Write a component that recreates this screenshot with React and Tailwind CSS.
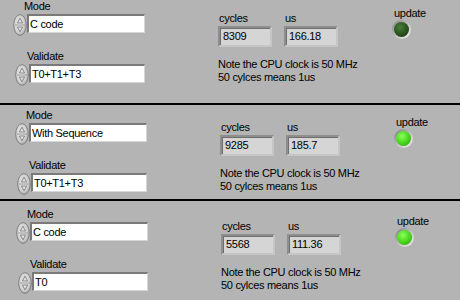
import React from "react";

const panels = [
  {
    mode: "C code",
    validate: "T0+T1+T3",
    cycles: "8309",
    us: "166.18",
    on: false,
    wrap: "h-[105px] border-b-2 border-black pt-0 pl-0",
  },
  {
    mode: "With Sequence",
    validate: "T0+T1+T3",
    cycles: "9285",
    us: "185.7",
    on: true,
    wrap: "h-[96px] border-b-2 border-black pt-[4px] pl-[2px]",
  },
  {
    mode: "C code",
    validate: "T0",
    cycles: "5568",
    us: "111.36",
    on: true,
    wrap: "h-[99px] pt-[7px] pl-[3px]",
  },
];

// little up/down ring-control arrows, LabVIEW style
const Spinner = () => (
  <svg width="14" height="22" viewBox="0 0 14 22" className="shrink-0">
    <defs>
      <radialGradient id="spin" cx="45%" cy="45%" r="65%">
        <stop offset="0%" stopColor="#efefef" />
        <stop offset="60%" stopColor="#d2d2d2" />
        <stop offset="100%" stopColor="#8e8e8e" />
      </radialGradient>
    </defs>
    <ellipse cx="7" cy="11" rx="6.3" ry="10.4" fill="url(#spin)" stroke="#7c7c7c" strokeWidth="0.9" />
    <line x1="2" y1="11" x2="12" y2="11" stroke="#8a8a8a" strokeWidth="0.8" />
    <path d="M7 4.2 L9.6 9 L4.4 9 Z" fill="#e4e4e4" stroke="#6e6e6e" strokeWidth="0.8" />
    <path d="M7 17.8 L9.6 13 L4.4 13 Z" fill="#e4e4e4" stroke="#6e6e6e" strokeWidth="0.8" />
  </svg>
);

const StringBox = ({ value, width }) => (
  <div
    className={`${width} h-[19px] bg-white border-t-2 border-l-2 border-r border-b border-t-[#7a7a7a] border-l-[#7a7a7a] border-r-[#d6d6d6] border-b-[#d6d6d6] pl-[1px] leading-[16px] whitespace-nowrap overflow-hidden`}
  >
    {value}
  </div>
);

const Indicator = ({ label, value }) => (
  <div className="flex flex-col">
    <div className="leading-[13px] pl-[1px]">{label}</div>
    <div className="mt-[1px] w-[54px] h-[21px] bg-[#d5d5d5] border-2 border-t-[#8e8e8e] border-l-[#8e8e8e] border-r-[#c6c6c6] border-b-[#c6c6c6] shadow-[inset_1px_1px_0_#6e6e6e] pl-[3px] leading-[17px]">
      {value}
    </div>
  </div>
);

const Led = ({ on }) => (
  <div className="w-[19px] h-[19px] rounded-full bg-[linear-gradient(135deg,#7a7a7a,#c4c4c4_55%,#f4f4f4)] p-[2px]">
    <div
      className={
        on
          ? "w-full h-full rounded-full bg-[radial-gradient(circle_at_40%_35%,#8dff5c,#4fdc22_45%,#2a9c0c)]"
          : "w-full h-full rounded-full bg-[radial-gradient(circle_at_40%_35%,#4a7c3a,#2b5620_50%,#142e0e)]"
      }
    />
  </div>
);

const Panel = ({ p }) => (
  <div className={`${p.wrap} flex items-start`}>
    {/* Mode / Validate controls */}
    <div className="w-[218px] flex flex-col">
      <div className="leading-[13px] pl-[24px]">Mode</div>
      <div className="mt-[1px] flex items-start pl-[13px]">
        <Spinner />
        <StringBox value={p.mode} width="w-[118px]" />
      </div>
      <div className="mt-[14px] leading-[13px] pl-[27px]">Validate</div>
      <div className="mt-[1px] flex items-start pl-[15px]">
        <Spinner />
        <StringBox value={p.validate} width="w-[116px]" />
      </div>
    </div>

    {/* timing indicators */}
    <div className="w-[174px] pt-[12px] flex flex-col">
      <div className="flex gap-[12px]">
        <Indicator label="cycles" value={p.cycles} />
        <Indicator label="us" value={p.us} />
      </div>
      <div className="mt-[11px] leading-[13px] whitespace-nowrap">
        <div>Note the CPU clock is 50 MHz</div>
        <div>50 cylces means 1us</div>
      </div>
    </div>

    {/* update LED */}
    <div className="pt-[7px] flex flex-col">
      <div className="leading-[13px] pl-[2px]">update</div>
      <Led on={p.on} />
    </div>
  </div>
);

export default function App() {
  return (
    <div className="w-[460px] h-[300px] overflow-hidden bg-[#b4b4b4] text-black text-[11px] tracking-[-0.3px] font-['Liberation_Sans',Arial,sans-serif]">
      {panels.map((p, i) => (
        <Panel key={i} p={p} />
      ))}
    </div>
  );
}
